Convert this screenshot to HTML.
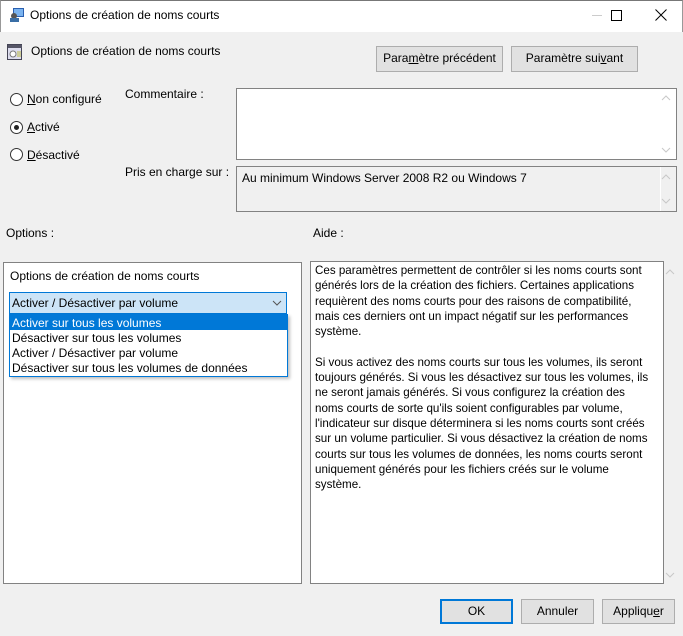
<!DOCTYPE html>
<html><head><meta charset="utf-8"><style>
*{box-sizing:border-box;margin:0;padding:0}
body{width:683px;height:636px;background:#f0f0f0;font-family:"Liberation Sans",sans-serif;font-size:12px;color:#000;position:relative;overflow:hidden}
.a{position:absolute;white-space:nowrap}
.btn{position:absolute;background:#e1e1e1;border:1px solid #adadad;text-align:center;line-height:22px;font-size:12px}
.rad{position:absolute;width:13px;height:13px;border:1px solid #333;border-radius:50%;background:#fff}
.box{position:absolute;border:1px solid #828282;background:#fff}
.chev{position:absolute}
u{text-decoration:underline}
</style></head><body>
<div class="a" style="left:0;top:0;width:683px;height:32px;background:#fff;border-top:1px solid #777;border-left:1px solid #999;border-right:1px solid #999"></div>
<svg class="a" style="left:9px;top:7px" width="16" height="16"><rect x="4" y="1" width="11" height="9" fill="#2a5fb0"/><rect x="5" y="2" width="9" height="7" fill="#7ab3ef"/><circle cx="5" cy="9" r="3" fill="#555"/><rect x="1" y="11" width="9" height="4" fill="#3a6ea5"/></svg>
<div class="a" style="left:30px;top:8px">Options de création de noms courts</div>
<div class="a" style="left:592px;top:15px;width:10px;height:1px;background:#ccc"></div>
<div class="a" style="left:611px;top:10px;width:11px;height:11px;border:1px solid #000"></div>
<svg class="a" style="left:655px;top:9px" width="12" height="12"><path d="M0.5 0.5L11.5 11.5M11.5 0.5L0.5 11.5" stroke="#000" stroke-width="1"/></svg>
<svg class="a" style="left:7px;top:44px" width="16" height="16"><rect x="0.5" y="0.5" width="14" height="15" fill="#dde" stroke="#445"/><rect x="1" y="1" width="14" height="3" fill="#556"/><circle cx="6" cy="10" r="3" fill="#fff" stroke="#777"/><rect x="10" y="7" width="4" height="6" fill="#cc9"/></svg>
<div class="a" style="left:31px;top:44px">Options de création de noms courts</div>
<div class="btn" style="left:376px;top:46px;width:127px;height:26px">Para<u>m</u>ètre précédent</div>
<div class="btn" style="left:511px;top:46px;width:127px;height:26px">Paramètre sui<u>v</u>ant</div>
<div class="rad" style="left:10px;top:93px"></div><div class="a" style="left:27px;top:92px"><u>N</u>on configuré</div>
<div class="rad" style="left:10px;top:121px"><div style="position:absolute;left:3px;top:3px;width:5px;height:5px;border-radius:50%;background:#222"></div></div><div class="a" style="left:27px;top:120px"><u>A</u>ctivé</div>
<div class="rad" style="left:10px;top:148px"></div><div class="a" style="left:27px;top:148px"><u>D</u>ésactivé</div>
<div class="a" style="left:125px;top:87px">Commentaire :</div>
<div class="box" style="left:236px;top:88px;width:441px;height:72px"></div>
<svg class="chev" style="left:661px;top:95px" width="10" height="6"><path d="M1 5L5 1L9 5" stroke="#c8c8c8" fill="none"/></svg>
<svg class="chev" style="left:661px;top:147px" width="10" height="6"><path d="M1 1L5 5L9 1" stroke="#c8c8c8" fill="none"/></svg>
<div class="a" style="left:125px;top:165px">Pris en charge sur :</div>
<div class="box" style="left:236px;top:166px;width:441px;height:46px;background:#f0f0f0"></div>
<div class="a" style="left:660px;top:167px;width:1px;height:44px;background:#fff"></div>
<div class="a" style="left:242px;top:171px">Au minimum Windows Server 2008 R2 ou Windows 7</div>
<svg class="chev" style="left:661px;top:174px" width="10" height="6"><path d="M1 5L5 1L9 5" stroke="#c8c8c8" fill="none"/></svg>
<svg class="chev" style="left:661px;top:198px" width="10" height="6"><path d="M1 1L5 5L9 1" stroke="#c8c8c8" fill="none"/></svg>
<div class="a" style="left:6px;top:226px">Options :</div>
<div class="a" style="left:313px;top:226px">Aide :</div>
<div class="box" style="left:3px;top:262px;width:299px;height:322px"></div>
<div class="a" style="left:10px;top:269px">Options de création de noms courts</div>
<div class="a" style="left:9px;top:292px;width:278px;height:22px;background:#cce4f7;border:1px solid #0078d7"></div>
<div class="a" style="left:12px;top:296px">Activer / Désactiver par volume</div>
<svg class="a" style="left:272px;top:300px" width="10" height="6"><path d="M1 1L5 5L9 1" stroke="#555" fill="none"/></svg>
<div class="a" style="left:9px;top:314px;width:279px;height:63px;background:#fff;border:1px solid #0078d7;box-shadow:2px 2px 3px rgba(0,0,0,.25)"></div>
<div class="a" style="left:10px;top:315px;width:277px;height:15px;background:#0078d7"></div>
<div class="a" style="left:12px;top:316px;color:#fff;line-height:15px">Activer sur tous les volumes</div>
<div class="a" style="left:12px;top:331px;line-height:15px">Désactiver sur tous les volumes</div>
<div class="a" style="left:12px;top:346px;line-height:15px">Activer / Désactiver par volume</div>
<div class="a" style="left:12px;top:361px;line-height:15px">Désactiver sur tous les volumes de données</div>
<div class="box" style="left:310px;top:261px;width:354px;height:323px"></div>
<svg class="chev" style="left:665px;top:269px" width="10" height="6"><path d="M1 5L5 1L9 5" stroke="#c8c8c8" fill="none"/></svg>
<svg class="chev" style="left:665px;top:572px" width="10" height="6"><path d="M1 1L5 5L9 1" stroke="#c8c8c8" fill="none"/></svg>
<div class="a" style="left:315px;top:263px;line-height:15.3px;font-size:11.6px">Ces paramètres permettent de contrôler si les noms courts sont<br>générés lors de la création des fichiers.  Certaines applications<br>requièrent des noms courts pour des raisons de compatibilité,<br>mais ces derniers ont un impact négatif sur les performances<br>système.<br><br>Si vous activez des noms courts sur tous les volumes, ils seront<br>toujours générés.  Si vous les désactivez sur tous les volumes, ils<br>ne seront jamais générés.  Si vous configurez la création des<br>noms courts de sorte qu'ils soient configurables par volume,<br>l'indicateur sur disque déterminera si les noms courts sont créés<br>sur un volume particulier.  Si vous désactivez la création de noms<br>courts sur tous les volumes de données, les noms courts seront<br>uniquement générés pour les fichiers créés sur le volume<br>système.</div>
<div class="btn" style="left:440px;top:599px;width:73px;height:25px;border:2px solid #0078d7;line-height:21px">OK</div>
<div class="btn" style="left:521px;top:599px;width:73px;height:25px">Annuler</div>
<div class="btn" style="left:602px;top:599px;width:73px;height:25px">Appliqu<u>e</u>r</div>
</body></html>
